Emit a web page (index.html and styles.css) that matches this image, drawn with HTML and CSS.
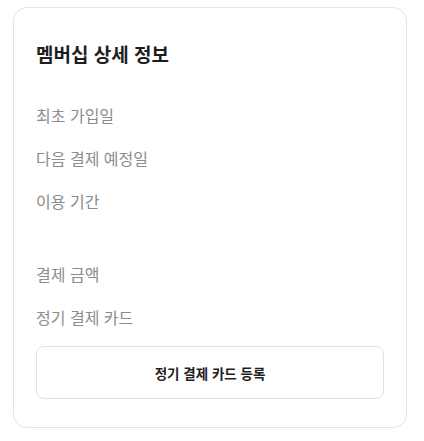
FILE: index.html
```html
<!DOCTYPE html>
<html lang="ko">
	<head>
		<title>멤버십 상세 정보</title>
		<meta charset="utf-8">
		<link rel="stylesheet" href="styles.css">
	</head>

	<body>
		<div class="card">
			<h2 class="card-title">멤버십 상세 정보</h2>

			<div class="section">
				<div class="row">최초 가입일</div>
				<div class="row">다음 결제 예정일</div>
				<div class="row">이용 기간</div>
			</div>

			<div class="section">
				<div class="row">결제 금액</div>
				<div class="row">정기 결제 카드</div>
			</div>

			<button class="btn-card">정기 결제 카드 등록</button>
		</div>
	</body>
</html>
```

FILE: styles.css
```css
body {
	margin: 0;
	background: #fff;
	font-family: "Noto Sans CJK KR", "Noto Sans", sans-serif;
	color: #222;
}

.card {
	box-sizing: border-box;
	width: 394px;
	margin: 7px 0 0 13px;
	padding: 33px 22px 28px 22px;
	border: 1px solid #e4e4e4;
	border-radius: 14px;
}

.card-title {
	margin: 0 0 37px 0;
	font-size: 19px;
	line-height: 26px;
	font-weight: 700;
	color: #1e1e1e;
}

.section {
	display: flex;
	flex-direction: column;
	gap: 21px;
}

.section + .section {
	margin-top: 51px;
}

.row {
	font-size: 16px;
	line-height: 22px;
	color: #8c8c8c;
}

.btn-card {
	display: block;
	box-sizing: border-box;
	width: 100%;
	height: 53px;
	margin-top: 18px;
	background: #fff;
	border: 1px solid #e2e2e2;
	border-radius: 8px;
	font-family: inherit;
	font-size: 13.5px;
	font-weight: 700;
	color: #1e1e1e;
	cursor: pointer;
}
```
